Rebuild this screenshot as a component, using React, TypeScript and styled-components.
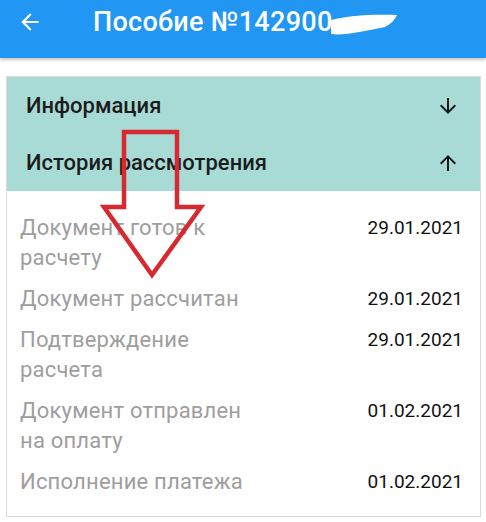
import React from 'react';
import styled, {createGlobalStyle} from 'styled-components';

const GlobalStyle = createGlobalStyle`
  html, body {
    margin: 0;
    padding: 0;
    background: #ffffff;
    font-family: Roboto, "Noto Sans", "Liberation Sans", sans-serif;
  }
`

type HistoryItem = {
    title: string
    date: string
}

const history: HistoryItem[] = [
    {title: 'Документ готов к расчету', date: '29.01.2021'},
    {title: 'Документ рассчитан', date: '29.01.2021'},
    {title: 'Подтверждение расчета', date: '29.01.2021'},
    {title: 'Документ отправлен на оплату', date: '01.02.2021'},
    {title: 'Исполнение платежа', date: '01.02.2021'},
];

const ArrowBack = () => (
    <svg width="26" height="26" viewBox="0 0 24 24" fill="#ffffff">
        <path d="M20 11H7.83l5.59-5.59L12 4l-8 8 8 8 1.41-1.41L7.83 13H20v-2z"/>
    </svg>
);

const ArrowVertical = ({up}: { up?: boolean }) => (
    <svg width="24" height="24" viewBox="0 0 24 24" fill="#1a1a1a"
         style={{transform: up ? 'rotate(180deg)' : undefined}}>
        <path d="M20 12l-1.41-1.41L13 16.17V4h-2v12.17l-5.58-5.59L4 12l8 8 8-8z"/>
    </svg>
);

export default function App() {
    return (
        <>
            <GlobalStyle/>
            <Header>
                <BackButton><ArrowBack/></BackButton>
                <Title>
                    Пособие №142900
                    <Redaction width="70" height="26" viewBox="0 0 70 26">
                        <path d="M2 8 C 20 3, 45 2, 68 3 C 66 8, 62 12, 56 15 C 48 17, 40 18, 30 20 C 20 22, 10 23, 2 22 Z"
                              fill="#ffffff"/>
                    </Redaction>
                </Title>
            </Header>
            <Card>
                <Accordion>
                    <AccordionRow>
                        <AccordionTitle>Информация</AccordionTitle>
                        <ArrowVertical/>
                    </AccordionRow>
                    <AccordionRow>
                        <AccordionTitle>История рассмотрения</AccordionTitle>
                        <ArrowVertical up/>
                    </AccordionRow>
                </Accordion>
                <HistoryList>
                    {history.map(item => (
                        <HistoryRow key={item.title}>
                            <HistoryTitle>{item.title}</HistoryTitle>
                            <HistoryDate>{item.date}</HistoryDate>
                        </HistoryRow>
                    ))}
                </HistoryList>
                <Pointer width="110" height="150" viewBox="0 0 110 150">
                    <path d="M26 3 H79 V78 H103 L54 146 L6 78 H26 Z"
                          fill="none" stroke="#d62a30" strokeWidth="4.5" strokeLinejoin="miter"/>
                </Pointer>
            </Card>
        </>
    );
}

const Header = styled.header`
  display: flex;
  align-items: center;
  height: 58px;
  padding: 0 0 14px 17px;
  box-sizing: border-box;
  background: #2196f3;
  box-shadow: 0 2px 3px rgba(0, 0, 0, 0.22);
`
const BackButton = styled.div`
  display: flex;
  width: 26px;
  height: 26px;
`
const Title = styled.h1`
  position: relative;
  margin: 0 0 0 50px;
  font-size: 27px;
  font-weight: 500;
  color: #ffffff;
  letter-spacing: 0.3px;
`
const Redaction = styled.svg`
  position: absolute;
  left: 100%;
  top: 6px;
  margin-left: -4px;
`
const Card = styled.section`
  position: relative;
  margin: 18px 5px 0 6px;
  border: 1px solid #dcdcdc;
`
const Accordion = styled.div`
  background: #a9dbd6;
`
const AccordionRow = styled.div`
  display: flex;
  align-items: center;
  justify-content: space-between;
  height: 57px;
  padding: 0 20px 0 19px;
`
const AccordionTitle = styled.span`
  font-size: 22px;
  font-weight: 500;
  color: #1c1c1c;
`
const HistoryList = styled.div`
  display: flex;
  flex-direction: column;
  gap: 11px;
  padding: 22px 17px 19px 13px;
`
const HistoryRow = styled.div`
  display: flex;
  justify-content: space-between;
  align-items: flex-start;
`
const HistoryTitle = styled.span`
  max-width: 235px;
  font-size: 22px;
  line-height: 30px;
  color: #9e9e9e;
  letter-spacing: 0.2px;
`
const HistoryDate = styled.span`
  font-size: 19px;
  line-height: 30px;
  color: #111111;
`
const Pointer = styled.svg`
  position: absolute;
  left: 91px;
  top: 52px;
`
